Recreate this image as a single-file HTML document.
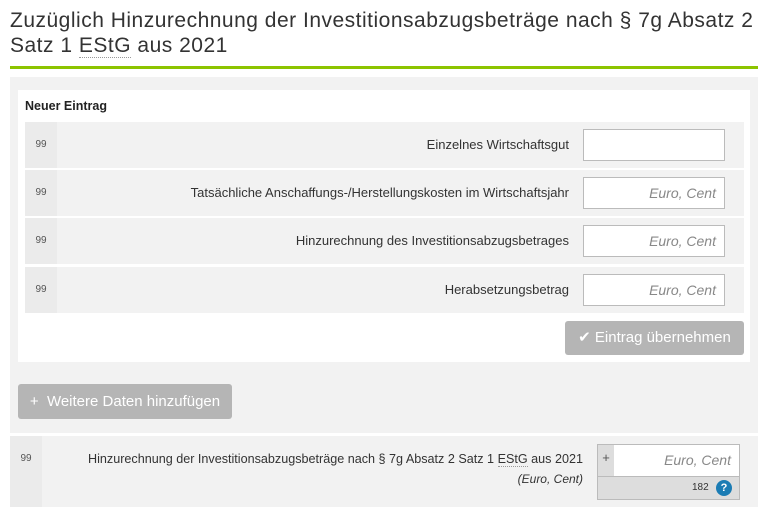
<!DOCTYPE html>
<html><head><meta charset="utf-8"><style>
*{box-sizing:border-box;margin:0;padding:0}
body{width:768px;height:514px;background:#fff;font-family:"Liberation Sans",sans-serif;color:#333;position:relative;overflow:hidden}
.a{position:absolute}
h1{position:absolute;left:10px;top:8px;width:758px;font-weight:normal;font-size:21px;line-height:25px;color:#333;letter-spacing:0.5px}
.abbr{border-bottom:1px dotted #999}
.row{position:absolute;left:25px;width:719px;height:46px;background:#f2f2f2}
.row .n{position:absolute;left:0;top:0;width:32px;height:46px;background:#ebebeb;font-size:10px;color:#555;text-align:center;line-height:46px}
.row .l{position:absolute;right:175px;top:0;line-height:46px;font-size:13px;color:#333}
.row .i{position:absolute;left:558px;top:7px;width:142px;height:32px;background:#fff;border:1px solid #bbb;font-style:italic;color:#888;font-size:14px;text-align:right;padding-right:8px;line-height:30px}
.btn{position:absolute;background:#b5b5b5;color:#fff;border-radius:3px;font-size:15px;text-align:center}
</style></head><body>
<h1>Zuzüglich Hinzurechnung der Investitionsabzugsbeträge nach § 7g Absatz 2<br>Satz 1 <span class="abbr">EStG</span> aus 2021</h1>
<div class="a" style="left:10px;top:66px;width:748px;height:3px;background:#8cc400"></div>
<div class="a" style="left:10px;top:77px;width:748px;height:356px;background:#f2f2f2"></div>
<div class="a" style="left:18px;top:90px;width:732px;height:272px;background:#fff"></div>
<div class="a" style="left:25px;top:99px;font-size:12.5px;font-weight:bold;color:#222">Neuer Eintrag</div>
<div class="row" style="top:122px"><div class="n">99</div><div class="l">Einzelnes Wirtschaftsgut</div><div class="i"></div></div>
<div class="row" style="top:170px"><div class="n">99</div><div class="l">Tatsächliche Anschaffungs-/Herstellungskosten im Wirtschaftsjahr</div><div class="i">Euro, Cent</div></div>
<div class="row" style="top:218px"><div class="n">99</div><div class="l">Hinzurechnung des Investitionsabzugsbetrages</div><div class="i">Euro, Cent</div></div>
<div class="row" style="top:267px"><div class="n">99</div><div class="l">Herabsetzungsbetrag</div><div class="i">Euro, Cent</div></div>
<div class="btn" style="left:565px;top:321px;width:179px;height:34px;line-height:34px">✔ Eintrag übernehmen</div>
<div class="btn" style="left:18px;top:384px;width:214px;height:35px;line-height:35px">+&nbsp; Weitere Daten hinzufügen</div>
<div class="a" style="left:10px;top:436px;width:748px;height:71px;background:#f2f2f2"></div>
<div class="a" style="left:10px;top:436px;width:32px;height:71px;background:#ebebeb;font-size:10px;color:#555;text-align:center;padding-top:17px">99</div>
<div class="a" style="right:185px;top:452px;font-size:12.6px;color:#333;text-align:right;white-space:nowrap">Hinzurechnung der Investitionsabzugsbeträge nach § 7g Absatz 2 Satz 1 <span class="abbr">EStG</span> aus 2021</div>
<div class="a" style="right:185px;top:472px;font-size:12px;font-style:italic;color:#333">(Euro, Cent)</div>
<div class="a" style="left:597px;top:444px;width:143px;height:56px;border:1px solid #bbb;background:#ddd">
<div class="a" style="left:16px;top:0;width:125px;height:31px;background:#fff;font-style:italic;color:#888;font-size:14px;text-align:right;padding-right:8px;line-height:31px">Euro, Cent</div>
<div class="a" style="left:0;top:0;width:16px;height:31px;font-size:13px;text-align:center;line-height:26px;color:#555">+</div>
<div class="a" style="left:0;top:31px;width:141px;border-top:1px solid #bbb"></div>
<div class="a" style="left:94px;top:37px;font-size:10px;color:#333">182</div>
<div class="a" style="left:118px;top:35px;width:16px;height:16px;border-radius:50%;background:#1b7cb4;color:#fff;font-weight:bold;font-size:11px;text-align:center;line-height:16px">?</div>
</div>
</body></html>
